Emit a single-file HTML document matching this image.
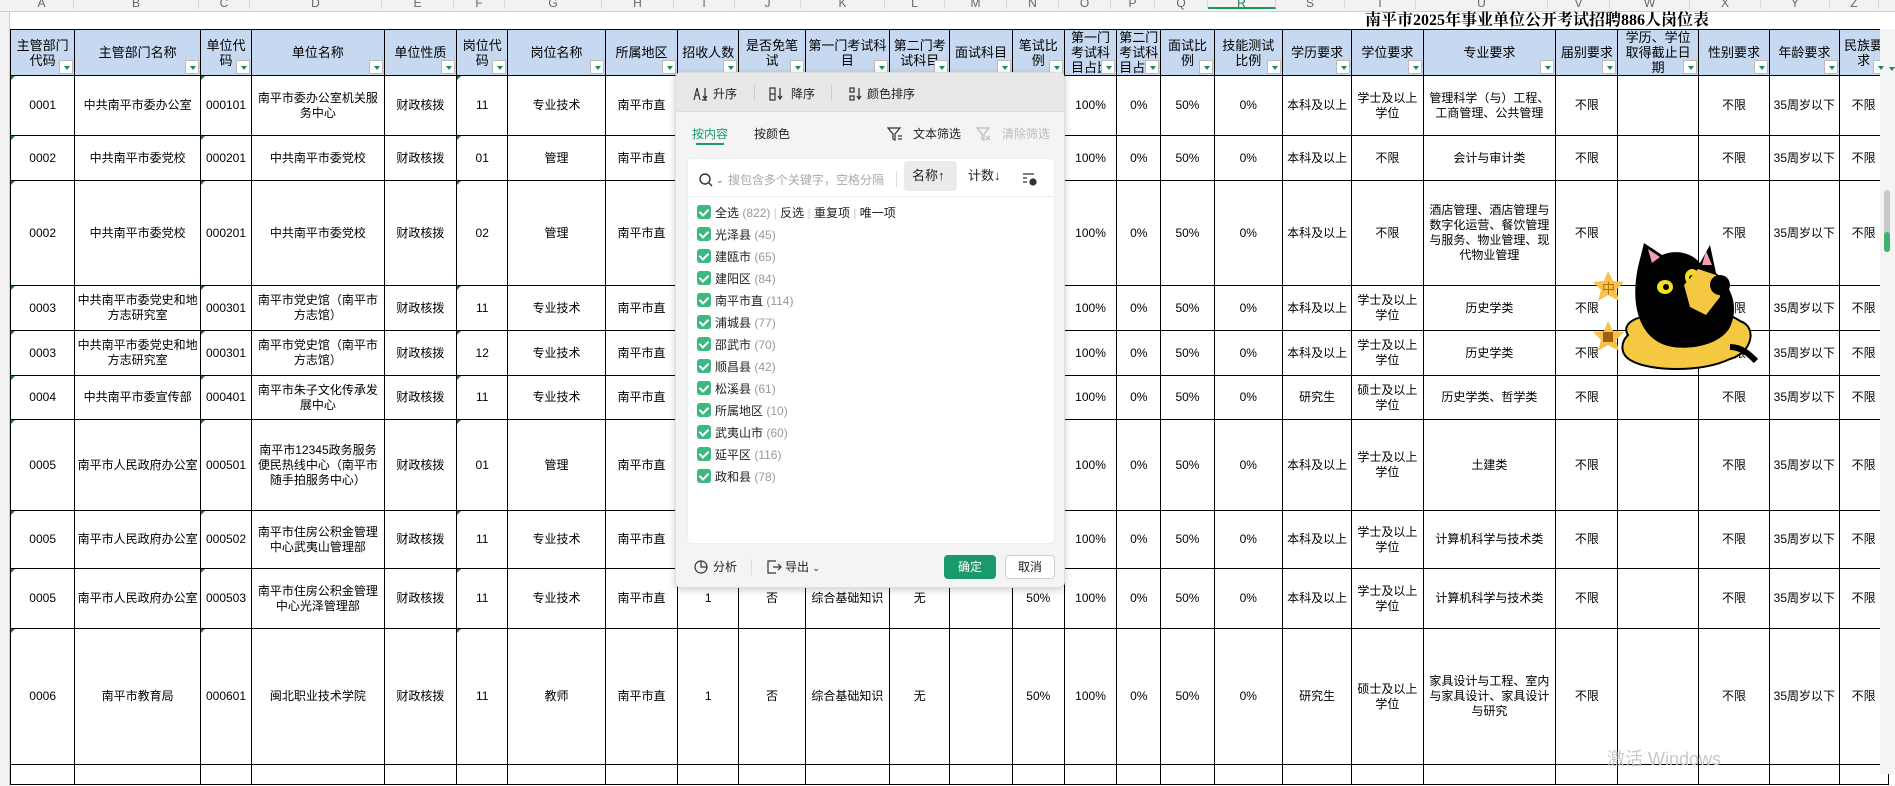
<!DOCTYPE html>
<html><head><meta charset="utf-8"><style>
*{box-sizing:border-box;margin:0;padding:0}
body{width:1895px;height:774px;overflow:hidden;background:#fff;font-family:"Liberation Sans","Noto Sans CJK SC",sans-serif;position:relative;color:#000}
.colhdr{position:absolute;left:0;top:0;height:12px;width:1895px;background:#f2f2f2;border-bottom:1px solid #d0d0d0}
.colhdr span{position:absolute;top:-3px;font-size:12px;color:#666;text-align:center;border-right:1px solid #d8d8d8;height:12px;line-height:12px}
.rowhdr{position:absolute;left:0;top:12px;width:10px;height:774px;background:#f2f2f2;border-right:1px solid #d0d0d0}
.title{position:absolute;left:1365px;top:12px;font-size:16px;font-weight:bold;font-family:"Liberation Serif","Noto Serif CJK SC",serif;white-space:nowrap;line-height:17px}
table{position:absolute;left:10px;top:29px;border-collapse:collapse;table-layout:fixed;width:1890px}
td{border:1px solid #000;font-size:12px;text-align:center;vertical-align:middle;line-height:15px;padding:0 2px;overflow:hidden;position:relative}
tr.h td{background:#c6d9f0;font-size:13px;height:46px;line-height:15px}
tr.h td div{max-height:45px;overflow:hidden}
tr.h td::after{content:"";position:absolute;right:1px;bottom:1px;width:12px;height:12px;background:#fff;border:1px solid #bbb}
tr.h td::before{content:"";position:absolute;right:4px;bottom:5px;border-left:3px solid transparent;border-right:3px solid transparent;border-top:4px solid #1a8a5a;z-index:2}
.tri::before{content:"";position:absolute;left:0;top:0;border-top:4px solid #1e7a3c;border-right:4px solid transparent}
.pop{position:absolute;left:675px;top:72px;width:390px;height:516px;background:#f4f4f4;border:1px solid #ddd;border-radius:6px;box-shadow:0 2px 8px rgba(0,0,0,.2);font-size:12px;color:#222}
.pop .tb{position:absolute;left:0;top:0;width:388px;height:39px;background:#e8e8e8;border-radius:6px 6px 0 0;border-bottom:1px solid #ddd}
.a{position:absolute;white-space:nowrap;line-height:14px}
.inner{position:absolute;left:11px;top:85px;width:368px;height:386px;background:#fff;border-radius:5px;border:1px solid #eee}
.cb{position:absolute;width:14px;height:14px;background:#3db883;border-radius:3px}
.cb::after{content:"";position:absolute;left:4px;top:2px;width:4px;height:7px;border:solid #fff;border-width:0 2px 2px 0;transform:rotate(45deg)}
.g{color:#999}
.list{position:absolute;left:0;top:0;font-size:12px;color:#222}
</style></head><body>
<div class="colhdr">
<span style="left:10px;width:64px">A</span><span style="left:74px;width:125px">B</span><span style="left:199px;width:51px">C</span><span style="left:250px;width:132px">D</span><span style="left:382px;width:72px">E</span><span style="left:454px;width:51px">F</span><span style="left:505px;width:97px">G</span><span style="left:602px;width:72px">H</span><span style="left:674px;width:61px">I</span><span style="left:735px;width:66px">J</span><span style="left:801px;width:84px">K</span><span style="left:885px;width:60px">L</span><span style="left:945px;width:62px">M</span><span style="left:1007px;width:52px">N</span><span style="left:1059px;width:52px">O</span><span style="left:1111px;width:44px">P</span><span style="left:1155px;width:53px">Q</span><span style="left:1208px;width:68px;color:#1a7a4a;border-bottom:2px solid #1a9a5a">R</span><span style="left:1276px;width:69px">S</span><span style="left:1345px;width:71px">T</span><span style="left:1416px;width:132px">U</span><span style="left:1548px;width:62px">V</span><span style="left:1610px;width:80px">W</span><span style="left:1690px;width:71px">X</span><span style="left:1761px;width:69px">Y</span><span style="left:1830px;width:49px">Z</span>
</div>
<div class="rowhdr"></div>
<div class="title">南平市2025年事业单位公开考试招聘886人岗位表</div>
<table>
<colgroup><col style="width:64px"><col style="width:125px"><col style="width:51px"><col style="width:132px"><col style="width:72px"><col style="width:51px"><col style="width:97px"><col style="width:72px"><col style="width:61px"><col style="width:66px"><col style="width:84px"><col style="width:60px"><col style="width:62px"><col style="width:52px"><col style="width:52px"><col style="width:44px"><col style="width:53px"><col style="width:68px"><col style="width:69px"><col style="width:71px"><col style="width:132px"><col style="width:62px"><col style="width:80px"><col style="width:71px"><col style="width:69px"><col style="width:49px"><col style="width:11px"></colgroup>
<tr class="h"><td><div>主管部门代码</div></td><td><div>主管部门名称</div></td><td><div>单位代码</div></td><td><div>单位名称</div></td><td><div>单位性质</div></td><td><div>岗位代码</div></td><td><div>岗位名称</div></td><td><div>所属地区</div></td><td><div>招收人数</div></td><td><div>是否免笔试</div></td><td><div>第一门考试科目</div></td><td><div>第二门考试科目</div></td><td><div>面试科目</div></td><td><div>笔试比例</div></td><td><div>第一门考试科目占比</div></td><td><div>第二门考试科目占比</div></td><td><div>面试比例</div></td><td><div>技能测试比例</div></td><td><div>学历要求</div></td><td><div>学位要求</div></td><td><div>专业要求</div></td><td><div>届别要求</div></td><td><div>学历、学位取得截止日期</div></td><td><div>性别要求</div></td><td><div>年龄要求</div></td><td><div>民族要求</div></td><td style="border:none;background:#fff"></td></tr>
<tr style="height:60px"><td class="tri">0001</td><td>中共南平市委办公室</td><td class="tri">000101</td><td>南平市委办公室机关服务中心</td><td>财政核拨</td><td class="tri">11</td><td>专业技术</td><td>南平市直</td><td>1</td><td>否</td><td></td><td></td><td></td><td>50%</td><td>100%</td><td>0%</td><td>50%</td><td>0%</td><td>本科及以上</td><td>学士及以上学位</td><td>管理科学（与）工程、工商管理、公共管理</td><td>不限</td><td></td><td>不限</td><td>35周岁以下</td><td>不限</td><td style="border:none"></td></tr>
<tr style="height:45px"><td class="tri">0002</td><td>中共南平市委党校</td><td class="tri">000201</td><td>中共南平市委党校</td><td>财政核拨</td><td class="tri">01</td><td>管理</td><td>南平市直</td><td>1</td><td>否</td><td></td><td></td><td></td><td>50%</td><td>100%</td><td>0%</td><td>50%</td><td>0%</td><td>本科及以上</td><td>不限</td><td>会计与审计类</td><td>不限</td><td></td><td>不限</td><td>35周岁以下</td><td>不限</td><td style="border:none"></td></tr>
<tr style="height:105px"><td class="tri">0002</td><td>中共南平市委党校</td><td class="tri">000201</td><td>中共南平市委党校</td><td>财政核拨</td><td class="tri">02</td><td>管理</td><td>南平市直</td><td>1</td><td>否</td><td></td><td></td><td></td><td>50%</td><td>100%</td><td>0%</td><td>50%</td><td>0%</td><td>本科及以上</td><td>不限</td><td>酒店管理、酒店管理与数字化运营、餐饮管理与服务、物业管理、现代物业管理</td><td>不限</td><td></td><td>不限</td><td>35周岁以下</td><td>不限</td><td style="border:none"></td></tr>
<tr style="height:45px"><td class="tri">0003</td><td>中共南平市委党史和地方志研究室</td><td class="tri">000301</td><td>南平市党史馆（南平市方志馆）</td><td>财政核拨</td><td class="tri">11</td><td>专业技术</td><td>南平市直</td><td>1</td><td>否</td><td></td><td></td><td></td><td>50%</td><td>100%</td><td>0%</td><td>50%</td><td>0%</td><td>本科及以上</td><td>学士及以上学位</td><td>历史学类</td><td>不限</td><td></td><td>不限</td><td>35周岁以下</td><td>不限</td><td style="border:none"></td></tr>
<tr style="height:45px"><td class="tri">0003</td><td>中共南平市委党史和地方志研究室</td><td class="tri">000301</td><td>南平市党史馆（南平市方志馆）</td><td>财政核拨</td><td class="tri">12</td><td>专业技术</td><td>南平市直</td><td>1</td><td>否</td><td></td><td></td><td></td><td>50%</td><td>100%</td><td>0%</td><td>50%</td><td>0%</td><td>本科及以上</td><td>学士及以上学位</td><td>历史学类</td><td>不限</td><td></td><td>不限</td><td>35周岁以下</td><td>不限</td><td style="border:none"></td></tr>
<tr style="height:44px"><td class="tri">0004</td><td>中共南平市委宣传部</td><td class="tri">000401</td><td>南平市朱子文化传承发展中心</td><td>财政核拨</td><td class="tri">11</td><td>专业技术</td><td>南平市直</td><td>1</td><td>否</td><td></td><td></td><td></td><td>50%</td><td>100%</td><td>0%</td><td>50%</td><td>0%</td><td>研究生</td><td>硕士及以上学位</td><td>历史学类、哲学类</td><td>不限</td><td></td><td>不限</td><td>35周岁以下</td><td>不限</td><td style="border:none"></td></tr>
<tr style="height:91px"><td class="tri">0005</td><td>南平市人民政府办公室</td><td class="tri">000501</td><td>南平市12345政务服务便民热线中心（南平市随手拍服务中心）</td><td>财政核拨</td><td class="tri">01</td><td>管理</td><td>南平市直</td><td>1</td><td>否</td><td></td><td></td><td></td><td>50%</td><td>100%</td><td>0%</td><td>50%</td><td>0%</td><td>本科及以上</td><td>学士及以上学位</td><td>土建类</td><td>不限</td><td></td><td>不限</td><td>35周岁以下</td><td>不限</td><td style="border:none"></td></tr>
<tr style="height:58px"><td class="tri">0005</td><td>南平市人民政府办公室</td><td class="tri">000502</td><td>南平市住房公积金管理中心武夷山管理部</td><td>财政核拨</td><td class="tri">11</td><td>专业技术</td><td>南平市直</td><td>1</td><td>否</td><td></td><td></td><td></td><td>50%</td><td>100%</td><td>0%</td><td>50%</td><td>0%</td><td>本科及以上</td><td>学士及以上学位</td><td>计算机科学与技术类</td><td>不限</td><td></td><td>不限</td><td>35周岁以下</td><td>不限</td><td style="border:none"></td></tr>
<tr style="height:60px"><td class="tri">0005</td><td>南平市人民政府办公室</td><td class="tri">000503</td><td>南平市住房公积金管理中心光泽管理部</td><td>财政核拨</td><td class="tri">11</td><td>专业技术</td><td>南平市直</td><td>1</td><td>否</td><td>综合基础知识</td><td>无</td><td></td><td>50%</td><td>100%</td><td>0%</td><td>50%</td><td>0%</td><td>本科及以上</td><td>学士及以上学位</td><td>计算机科学与技术类</td><td>不限</td><td></td><td>不限</td><td>35周岁以下</td><td>不限</td><td style="border:none"></td></tr>
<tr style="height:136px"><td class="tri">0006</td><td>南平市教育局</td><td class="tri">000601</td><td>闽北职业技术学院</td><td>财政核拨</td><td class="tri">11</td><td>教师</td><td>南平市直</td><td>1</td><td>否</td><td>综合基础知识</td><td>无</td><td></td><td>50%</td><td>100%</td><td>0%</td><td>50%</td><td>0%</td><td>研究生</td><td>硕士及以上学位</td><td>家具设计与工程、室内与家具设计、家具设计与研究</td><td>不限</td><td></td><td>不限</td><td>35周岁以下</td><td>不限</td><td style="border:none"></td></tr>
<tr style="height:20px"><td></td><td></td><td></td><td></td><td></td><td></td><td></td><td></td><td></td><td></td><td></td><td></td><td></td><td></td><td></td><td></td><td></td><td></td><td></td><td></td><td></td><td></td><td></td><td></td><td></td><td></td><td style="border:none"></td></tr>
</table>

<div style="position:absolute;left:1880px;top:29px;width:15px;height:745px;background:#f4f4f4"></div>
<div style="position:absolute;left:1884px;top:190px;width:6px;height:62px;background:#c8c8c8;border-radius:3px"></div>
<div style="position:absolute;left:1884px;top:232px;width:6px;height:20px;background:#3cb371;border-radius:3px"></div>

<div class="pop">
<div class="tb"></div>
<svg class="a" style="left:17px;top:13px" width="16" height="16" viewBox="0 0 16 16" fill="none" stroke="#333" stroke-width="1.2"><path d="M1 14L4 2L7 14M2.3 9H5.7M9 14H14"/><path d="M12 2V12M10 10L12 13L14 10"/></svg>
<span class="a" style="left:37px;top:14px">升序</span>
<span class="a" style="left:78px;top:12px;width:1px;height:16px;background:#ccc"></span>
<svg class="a" style="left:93px;top:13px" width="16" height="16" viewBox="0 0 16 16" fill="none" stroke="#333" stroke-width="1.2"><path d="M1 2H6V14H1ZM1 8H6"/><path d="M11 2V12M9 10L11 13L13 10"/></svg>
<span class="a" style="left:115px;top:14px">降序</span>
<span class="a" style="left:155px;top:12px;width:1px;height:16px;background:#ccc"></span>
<svg class="a" style="left:173px;top:13px" width="16" height="16" viewBox="0 0 16 16" fill="none" stroke="#333" stroke-width="1.2"><rect x="1" y="2" width="4" height="4"/><rect x="1" y="10" width="4" height="4"/><path d="M10 2V12M8 10L10 13L12 10"/></svg>
<span class="a" style="left:191px;top:14px">颜色排序</span>
<span class="a" style="left:16px;top:54px;color:#1a9a6a">按内容</span>
<span class="a" style="left:20px;top:70px;width:28px;height:2px;background:#1a9a6a"></span>
<span class="a" style="left:78px;top:54px">按颜色</span>
<svg class="a" style="left:211px;top:53px" width="16" height="16" viewBox="0 0 16 16" fill="none" stroke="#333" stroke-width="1.2"><path d="M1 2H13L8 8V14L6 13V8Z"/><path d="M11 10H15M11 13H15"/></svg>
<span class="a" style="left:237px;top:54px">文本筛选</span>
<svg class="a" style="left:300px;top:53px" width="16" height="16" viewBox="0 0 16 16" fill="none" stroke="#bbb" stroke-width="1.2"><path d="M1 2H13L8 8V14L6 13V8Z"/><path d="M10 10L14 14M14 10L10 14"/></svg>
<span class="a g" style="left:326px;top:54px;color:#bbb">清除筛选</span>
<div class="inner">
<svg class="a" style="left:10px;top:13px" width="16" height="16" viewBox="0 0 16 16" fill="none" stroke="#333" stroke-width="1.4"><circle cx="7" cy="7" r="5"/><path d="M11 11L14 14"/></svg>
<span class="a" style="left:28px;top:14px;font-size:9px;color:#666">⌄</span>
<span class="a" style="left:40px;top:14px;color:#aaa;font-size:12px">搜包含多个关键字，空格分隔</span>
<span class="a" style="left:208px;top:12px;width:1px;height:16px;background:#ddd"></span>
<span class="a" style="left:216px;top:2px;width:53px;height:30px;background:#ebebeb;border-radius:4px"></span>
<span class="a" style="left:224px;top:10px;font-size:13px">名称↑</span>
<span class="a" style="left:280px;top:10px;font-size:13px">计数↓</span>
<svg class="a" style="left:334px;top:12px" width="16" height="16" viewBox="0 0 16 16" fill="none" stroke="#333" stroke-width="1.2"><path d="M1 3H12M1 7H5M1 11H5"/><circle cx="11" cy="11" r="3" fill="#333"/></svg>
<span class="a" style="left:0;top:37px;width:366px;height:1px;background:#eee"></span>
</div>
<svg class="a" style="left:17px;top:486px" width="16" height="16" viewBox="0 0 16 16" fill="none" stroke="#333" stroke-width="1.2"><circle cx="8" cy="8" r="6"/><path d="M8 2V8H14"/></svg>
<span class="a" style="left:37px;top:487px">分析</span>
<span class="a" style="left:75px;top:486px;width:1px;height:16px;background:#ddd"></span>
<svg class="a" style="left:90px;top:486px" width="16" height="16" viewBox="0 0 16 16" fill="none" stroke="#333" stroke-width="1.2"><path d="M10 2H2V14H10M7 8H15M12 5L15 8L12 11"/></svg>
<span class="a" style="left:109px;top:487px">导出 <span style="font-size:9px">⌄</span></span>
<span class="a" style="left:268px;top:482px;width:52px;height:24px;background:#1a9a6a;border-radius:4px;color:#fff;text-align:center;line-height:24px">确定</span>
<span class="a" style="left:329px;top:482px;width:50px;height:24px;background:#fff;border:1px solid #ccc;border-radius:4px;text-align:center;line-height:22px">取消</span>
</div>
<div class="list">
<div class="cb" style="left:697px;top:205px"></div><span class="a" style="left:715px;top:206px">全选 <span class="g">(822)</span> <span style="color:#ccc">|</span> 反选 <span style="color:#ccc">|</span> 重复项 <span style="color:#ccc">|</span> 唯一项</span>
<div class="cb" style="left:697px;top:227px"></div><span class="a" style="left:715px;top:228px">光泽县 <span class="g">(45)</span></span>
<div class="cb" style="left:697px;top:249px"></div><span class="a" style="left:715px;top:250px">建瓯市 <span class="g">(65)</span></span>
<div class="cb" style="left:697px;top:271px"></div><span class="a" style="left:715px;top:272px">建阳区 <span class="g">(84)</span></span>
<div class="cb" style="left:697px;top:293px"></div><span class="a" style="left:715px;top:294px">南平市直 <span class="g">(114)</span></span>
<div class="cb" style="left:697px;top:315px"></div><span class="a" style="left:715px;top:316px">浦城县 <span class="g">(77)</span></span>
<div class="cb" style="left:697px;top:337px"></div><span class="a" style="left:715px;top:338px">邵武市 <span class="g">(70)</span></span>
<div class="cb" style="left:697px;top:359px"></div><span class="a" style="left:715px;top:360px">顺昌县 <span class="g">(42)</span></span>
<div class="cb" style="left:697px;top:381px"></div><span class="a" style="left:715px;top:382px">松溪县 <span class="g">(61)</span></span>
<div class="cb" style="left:697px;top:403px"></div><span class="a" style="left:715px;top:404px">所属地区 <span class="g">(10)</span></span>
<div class="cb" style="left:697px;top:425px"></div><span class="a" style="left:715px;top:426px">武夷山市 <span class="g">(60)</span></span>
<div class="cb" style="left:697px;top:447px"></div><span class="a" style="left:715px;top:448px">延平区 <span class="g">(116)</span></span>
<div class="cb" style="left:697px;top:469px"></div><span class="a" style="left:715px;top:470px">政和县 <span class="g">(78)</span></span>
</div>

<svg style="position:absolute;left:1580px;top:235px" width="180" height="140" viewBox="0 0 180 140">
<path d="M48 100C40 88 60 78 80 82C100 70 140 72 160 86C178 92 172 118 150 124C120 138 70 136 52 126C40 120 40 108 48 100Z" fill="#f5c842" stroke="#000" stroke-width="2"/>
<path d="M58 32L64 8L82 20C96 14 112 18 120 28L130 10L136 38C150 50 160 70 150 92C140 112 100 118 80 108C60 98 50 70 58 32Z" fill="#000"/>
<path d="M68 14L72 28L80 22Z" fill="#f0a0b0"/><path d="M126 16L122 30L132 30Z" fill="#f0a0b0"/>
<ellipse cx="85" cy="52" rx="8" ry="7" fill="#f0e020"/><ellipse cx="112" cy="42" rx="7" ry="8" fill="#f0e020"/>
<circle cx="86" cy="52" r="3" fill="#000"/><circle cx="112" cy="43" r="3" fill="#000"/>
<path d="M104 50L118 34L136 40L140 62L126 80L110 72Z" fill="#f5c842"/>
<circle cx="140" cy="50" r="10" fill="#000"/>
<path d="M150 112C162 112 170 120 176 126" stroke="#000" stroke-width="6" fill="none"/>
<path d="M28 36L33 46L44 47L36 55L39 66L28 60L18 66L21 55L13 47L24 46Z" fill="#f7c14a"/>
<text x="22" y="58" font-size="13" fill="#b07010" font-family="Noto Sans CJK SC">中</text>
<path d="M28 86L33 96L44 97L36 105L39 116L28 110L18 116L21 105L13 97L24 96Z" fill="#f7c14a"/>
<rect x="23" y="97" width="10" height="10" fill="#a06010"/>
</svg>
<div style="position:absolute;left:1607px;top:745px;font-size:18px;color:#c8c8c8">激活 Windows</div>
</body></html>
